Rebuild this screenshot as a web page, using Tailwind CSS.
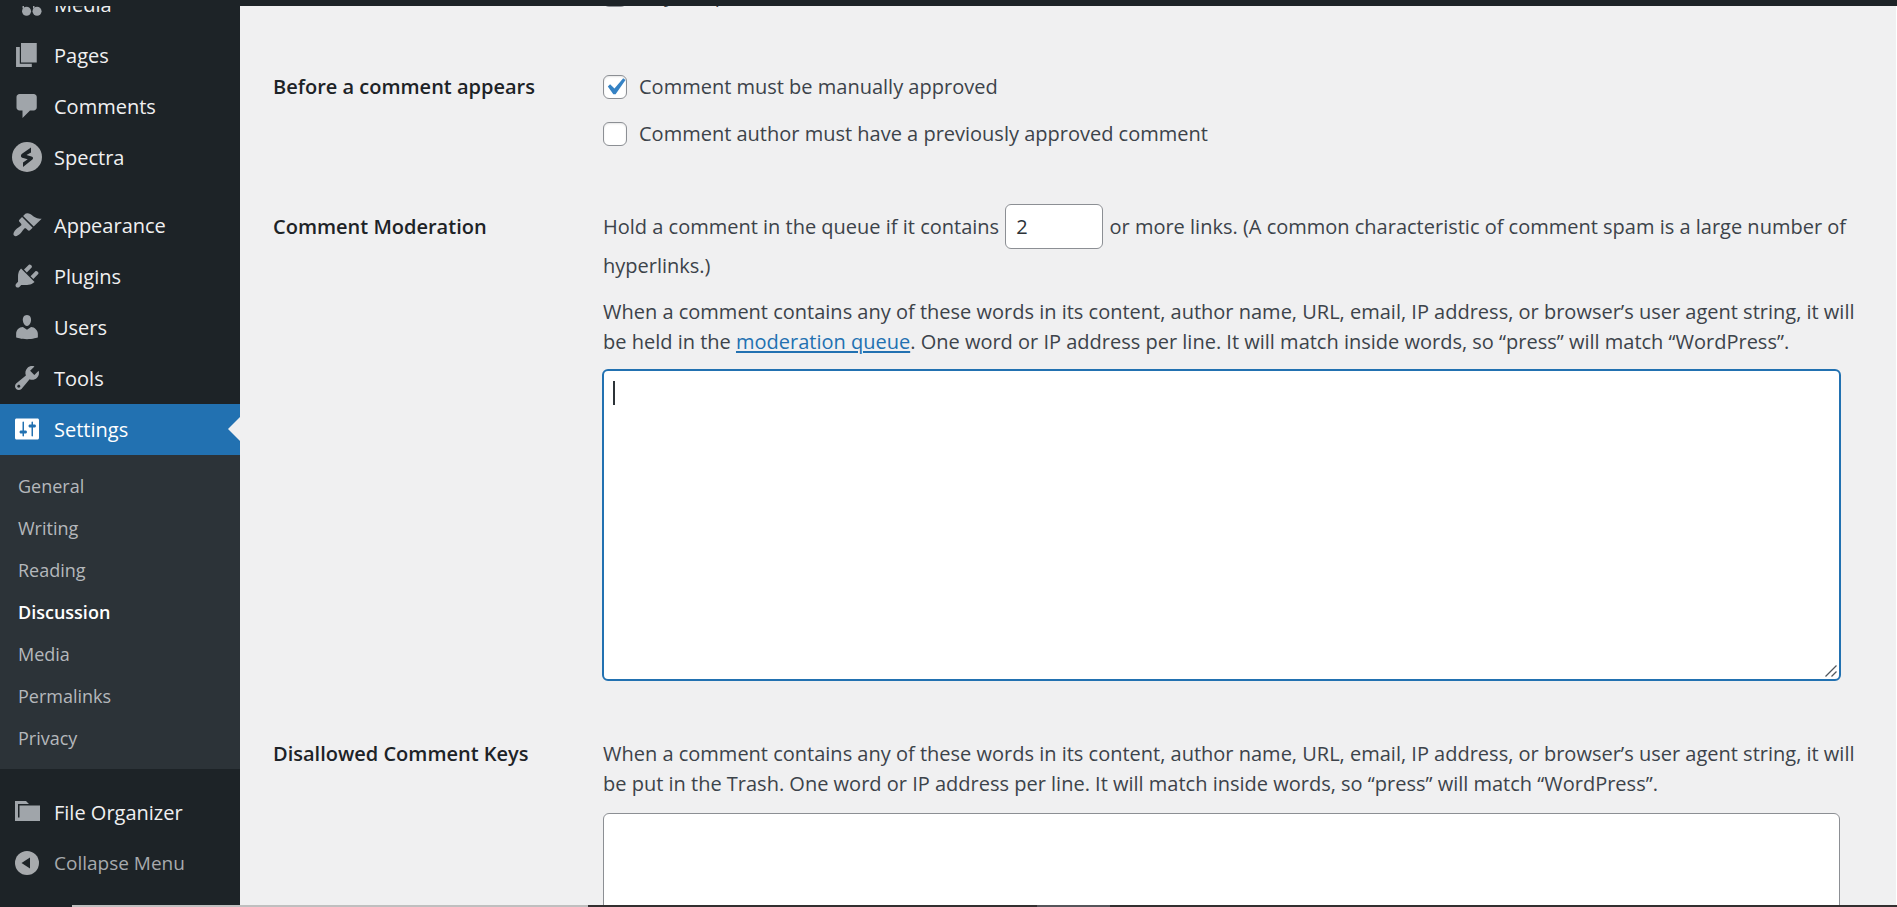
<!DOCTYPE html>
<html lang="en">
<head>
<meta charset="utf-8">
<title>Discussion Settings</title>
<script src="https://cdn.jsdelivr.net/npm/@tailwindcss/browser@4"></script>
</head>
<body class="h-screen overflow-hidden bg-[#f0f0f1] font-['Open_Sans','Noto_Sans',sans-serif] text-[20px] text-[#3c434a]">
<div class="fixed inset-x-0 top-0 z-20 h-1.5 bg-[#1d2327]"></div>

<div class="flex h-full overflow-hidden border-r border-white">
  <nav aria-label="Main menu" class="w-60 shrink-0 bg-[#1d2327] text-[#f0f0f1]">
    <ul class="-mt-[21px]">
      <li><a href="#" class="flex h-[51px] items-center gap-3 pl-3"><svg class="mb-0.5 size-[30px] fill-[#a0a5aa]" viewBox="0 0 20 20"><path d="M7 8h1v5h-1zM14 8h1v5h-1z"/><circle cx="9.700" cy="14.800" r="3"/><circle cx="16.700" cy="14.800" r="3"/></svg>Media</a></li>
      <li><a href="#" class="flex h-[51px] items-center gap-3 pl-3"><svg class="mb-0.5 size-[30px] fill-[#a0a5aa]" viewBox="0 0 20 20"><path d="M6 15V2h10.500v13H6zm-.8.800h8V18H2.700V4.700h2.500v11.100z"/></svg>Pages</a></li>
      <li><a href="#" class="flex h-[51px] items-center gap-3 pl-3"><svg class="mb-0.5 size-[30px] fill-[#a0a5aa]" viewBox="0 0 20 20"><path d="M5 2h9.500c1.100 0 2 .9 2 2v7c0 1.100-.9 2-2 2H12l-5 5v-5H5c-1.100 0-2-.9-2-2V4c0-1.100.9-2 2-2z"/></svg>Comments</a></li>
      <li><a href="#" class="flex h-[51px] items-center gap-3 pl-3"><svg class="mb-0.5 size-[30px]" viewBox="0 0 30 30"><circle cx="15" cy="15" r="15" fill="#a7aaad"/><path d="M19 5.500v5L14.500 13l5 1.500c1.700.6 2 2 .9 3L11 25v-4.500l4.700-3.200-5.500-1.600c-1.700-.7-1.700-2.900-.2-4z" fill="#1d2327"/></svg>Spectra</a></li>
      <li aria-hidden="true" class="h-[17px]"></li>
      <li><a href="#" class="flex h-[51px] items-center gap-3 pl-3"><svg class="mb-0.5 size-[30px] fill-[#a0a5aa]" viewBox="0 0 20 20"><path d="M14.480 11.060L7.410 3.990l1.500-1.500c.5-.56 2.300-.47 3.510.32 1.210.8 1.430 1.280 2.910 2.100 1.180.64 2.450 1.260 4.450.85zm-.71.71L6.700 4.700 4.930 6.470c-.39.39-.39 1.020 0 1.410l1.060 1.060c.39.39.39 1.030 0 1.420-.6.6-1.430 1.110-2.210 1.690-.35.26-.7.53-1.010.84C1.430 14.230.4 16.080 1.400 17.070c.99 1 2.840-.03 4.180-1.360.31-.31.58-.66.85-1.020.57-.78 1.080-1.610 1.690-2.210.39-.39 1.020-.39 1.410 0l1.060 1.060c.39.39 1.020.39 1.410 0z"/></svg>Appearance</a></li>
      <li><a href="#" class="flex h-[51px] items-center gap-3 pl-3"><svg class="mb-0.5 size-[30px] fill-[#a0a5aa]" viewBox="0 0 20 20"><path d="M13.110 4.360L9.870 7.600 8 5.730l3.240-3.240c.35-.34 1.050-.2 1.560.32.52.51.66 1.210.31 1.550zm-8 1.770l.91-1.120 9.010 9.010-1.190.84c-.71.71-2.630 1.160-3.820 1.160H6.140L4.900 17.260c-.59.59-1.540.59-2.120 0-.59-.58-.59-1.530 0-2.120l1.240-1.240v-3.880c0-1.130.4-3.190 1.090-3.890zm7.260 3.970l3.240-3.240c.34-.35 1.040-.21 1.550.31.52.51.66 1.210.31 1.550l-3.240 3.250z"/></svg>Plugins</a></li>
      <li><a href="#" class="flex h-[51px] items-center gap-3 pl-3"><svg class="mb-0.5 size-[30px] fill-[#a0a5aa]" viewBox="0 0 20 20"><path d="M10 9.250c-2.270 0-2.730-3.440-2.730-3.440C7 4.020 7.820 2 9.970 2c2.160 0 2.980 2.020 2.710 3.810 0 0-.41 3.440-2.680 3.440zm0 2.570L12.720 10c2.390 0 4.520 2.330 4.520 4.530v2.490s-3.650 1.130-7.240 1.130c-3.650 0-7.240-1.130-7.240-1.130v-2.490c0-2.250 1.940-4.480 4.470-4.480z"/></svg>Users</a></li>
      <li><a href="#" class="flex h-[51px] items-center gap-3 pl-3"><svg class="mb-0.5 size-[30px] fill-[#a0a5aa]" viewBox="0 0 20 20"><path d="M16.680 9.770c-1.340 1.340-3.300 1.670-4.950.99l-5.410 6.520c-.99.99-2.590.99-3.580 0s-.99-2.590 0-3.570l6.520-5.420c-.68-1.650-.35-3.610.99-4.950 1.280-1.280 3.120-1.620 4.720-1.060l-2.890 2.890 2.820 2.820 2.860-2.870c.53 1.580.18 3.390-1.080 4.650zM3.810 16.210c.4.39 1.040.39 1.430 0 .4-.4.4-1.040 0-1.430-.39-.4-1.030-.4-1.430 0-.39.39-.39 1.030 0 1.430z"/></svg>Tools</a></li>
      <li>
        <a href="#" class="relative flex h-[51px] items-center gap-3 bg-[#2271b1] pl-3 text-white"><svg class="mb-0.5 size-[30px] fill-white" viewBox="0 0 20 20"><path d="M18 16V4c0-.55-.45-1-1-1H3c-.55 0-1 .45-1 1v12c0 .55.45 1 1 1h14c.55 0 1-.45 1-1zM8 11h1c.55 0 1 .45 1 1s-.45 1-1 1H8v1.500c0 .28-.22.5-.5.5s-.5-.22-.5-.5V13H6c-.55 0-1-.45-1-1s.45-1 1-1h1V5.500c0-.28.22-.5.5-.5s.5.22.5.5V11zm5-2h-1c-.55 0-1-.45-1-1s.45-1 1-1h1V5.500c0-.28.22-.5.5-.5s.5.22.5.5V7h1c.55 0 1 .45 1 1s-.45 1-1 1h-1v5.500c0 .28-.22.5-.5.5s-.5-.22-.5-.5V9z"/></svg>Settings
          <svg class="absolute right-0 top-[13px] h-6 w-3 fill-[#f0f0f1]" viewBox="0 0 12 24"><path d="M12 0v24L0 12z"/></svg></a>
        <ul class="bg-[#2c3338] py-2.5 text-[18px] text-[#b5b8bc]">
          <li><a href="#" class="flex h-[42px] items-center pl-[18px]">General</a></li>
          <li><a href="#" class="flex h-[42px] items-center pl-[18px]">Writing</a></li>
          <li><a href="#" class="flex h-[42px] items-center pl-[18px]">Reading</a></li>
          <li><a href="#" aria-current="page" class="flex h-[42px] items-center pl-[18px] font-semibold text-white">Discussion</a></li>
          <li><a href="#" class="flex h-[42px] items-center pl-[18px]">Media</a></li>
          <li><a href="#" class="flex h-[42px] items-center pl-[18px]">Permalinks</a></li>
          <li><a href="#" class="flex h-[42px] items-center pl-[18px]">Privacy</a></li>
        </ul>
      </li>
      <li aria-hidden="true" class="h-[18px]"></li>
      <li><a href="#" class="flex h-[51px] items-center gap-3 pl-3"><svg class="mb-0.5 size-[30px] fill-[#a0a5aa]" viewBox="0 0 30 30"><path d="M3 4h11l3 3H6v14H3z"/><path d="M7.500 8.500H28V24H3v-3.500h4.500z"/></svg>File Organizer</a></li>
      <li><button type="button" class="flex h-[51px] w-full items-center gap-3 pl-3 text-[19px] text-[#a7aaad]"><svg class="mb-0.5 size-[30px]" viewBox="0 0 30 30"><circle cx="15" cy="15" r="12" fill="#a7aaad"/><path d="M18 9.500v11L9.500 15z" fill="#1d2327"/></svg>Collapse Menu</button></li>
    </ul>
  </nav>

  <main class="min-w-0 flex-1 pl-[33px] pr-[37px]">
    <form>
      <div class="-mt-[20px] flex h-[30px] items-center gap-3 pl-[330px]">
        <input id="notify" type="checkbox" class="size-6 appearance-none rounded-md border border-[#8c8f94] bg-white">
        <label for="notify">Anyone posts a comment</label>
      </div>

      <section class="mt-[62px] grid grid-cols-[330px_1fr]">
        <h2 class="font-semibold leading-[30px] text-[#1d2327]">Before a comment appears</h2>
        <div class="flex flex-col gap-[17px]">
          <div class="flex h-[30px] items-center gap-3">
            <span class="relative flex">
              <input id="manual" type="checkbox" checked class="size-6 appearance-none rounded-md border border-[#8c8f94] bg-white shadow-[inset_0_1px_2px_rgb(0_0_0/0.1)]">
              <svg class="pointer-events-none absolute -left-[5px] -top-[5px] size-[34px] fill-[#3582c4]" viewBox="0 0 20 20"><path d="M14.830 4.890l1.340.94-5.810 8.380H9.020L5.780 9.670l1.340-1.250 2.570 2.400z"/></svg>
            </span>
            <label for="manual">Comment must be manually approved</label>
          </div>
          <div class="flex h-[30px] items-center gap-3">
            <input id="previous" type="checkbox" class="size-6 appearance-none rounded-md border border-[#8c8f94] bg-white shadow-[inset_0_1px_2px_rgb(0_0_0/0.1)]">
            <label for="previous">Comment author must have a previously approved comment</label>
          </div>
        </div>
      </section>

      <section class="mt-[55px] grid grid-cols-[330px_1fr]">
        <h2 class="pt-2 font-semibold leading-[30px] text-[#1d2327]">Comment Moderation</h2>
        <div>
          <p class="leading-[30px]"><label for="links">Hold a comment in the queue if it contains</label>
            <input id="links" type="text" inputmode="numeric" value="2" class="mx-px mb-0.5 h-[45px] w-[98px] rounded-md border border-[#8c8f94] bg-white px-2.5 align-baseline text-[#2c3338]"> or more links. (A common characteristic of comment spam is a large number of hyperlinks.)</p>
          <p class="mt-4 leading-[30px]"><label for="moderation">When a comment contains any of these words in its content, author name, URL, email, IP address, or browser’s user agent string, it will be held in the</label> <a href="#" class="text-[#2271b1] underline decoration-2 underline-offset-2">moderation queue</a>. One word or IP address per line. It will match inside words, so “press” will match “WordPress”.</p>
          <div class="relative -ml-px mt-3 mr-[18px]">
            <textarea id="moderation" class="block h-[312px] w-full resize-none rounded-md border-2 border-[#2271b1] bg-white px-2.5 py-2 outline-none"></textarea>
            <span class="absolute left-[11px] top-3 h-6 w-0.5 bg-[#2c3338]"></span>
            <svg class="pointer-events-none absolute bottom-1 right-1 size-3 stroke-[#50575e]" viewBox="0 0 12 12" fill="none"><path d="M.5 11.500l11-11M6.500 11.500l5-5" stroke-width="1.300"/></svg>
          </div>
        </div>
      </section>

      <section class="mt-[58px] grid grid-cols-[330px_1fr]">
        <h2 class="font-semibold leading-[30px] text-[#1d2327]">Disallowed Comment Keys</h2>
        <div>
          <p class="leading-[30px]"><label for="disallowed">When a comment contains any of these words in its content, author name, URL, email, IP address, or browser’s user agent string, it will be put in the Trash. One word or IP address per line. It will match inside words, so “press” will match “WordPress”.</label></p>
          <div class="mr-[19px] mt-3.5">
            <textarea id="disallowed" class="block h-[312px] w-full rounded-md border border-[#8c8f94] bg-white px-2.5 py-2"></textarea>
          </div>
        </div>
      </section>
    </form>
  </main>
</div>

<div class="fixed inset-x-0 bottom-0 z-20 flex h-0.5 bg-[#332f30]">
  <span class="w-[72px] bg-[#1d2327]"></span>
  <span class="w-[516px] bg-[#bfbfbf]"></span>
  <span class="ml-[449px] w-[73px] bg-[#56555a]"></span>
</div>
</body>
</html>
